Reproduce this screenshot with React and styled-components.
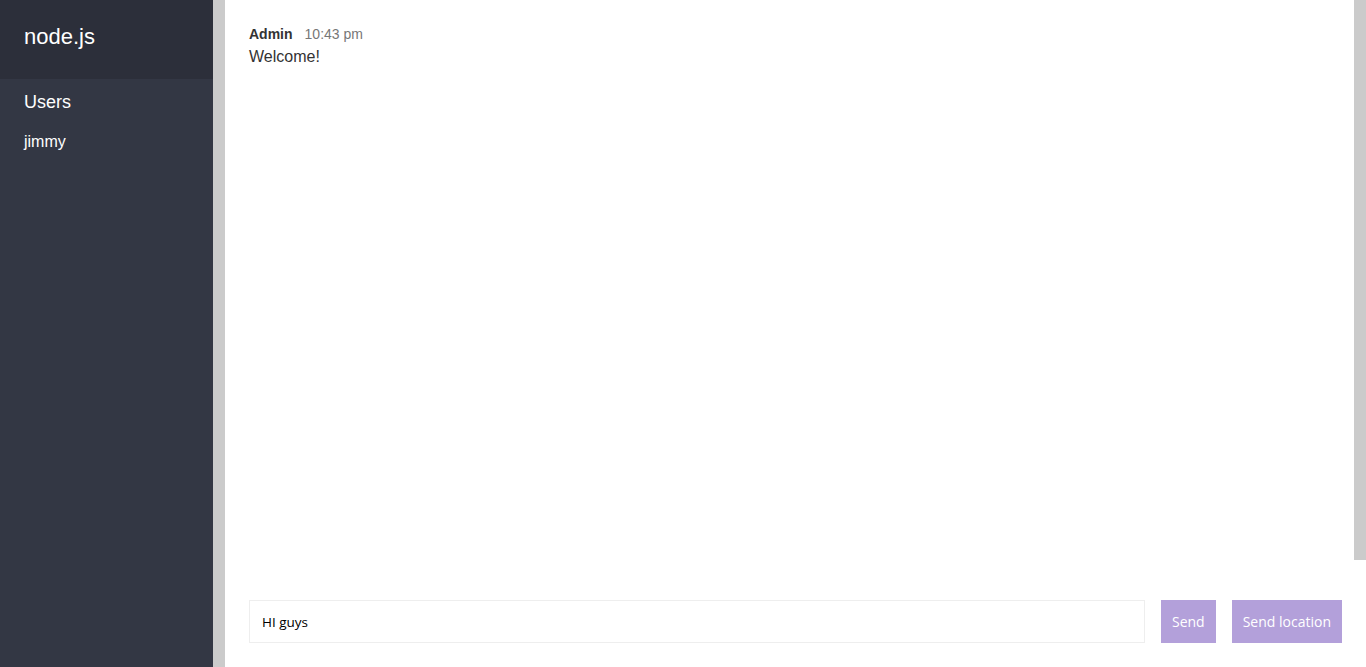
import React, { useState } from "react";
import styled, { createGlobalStyle } from "styled-components";

const GlobalStyle = createGlobalStyle`
  * { box-sizing: border-box; }
  body {
    margin: 0;
    font-family: "Liberation Sans", Helvetica, Arial, sans-serif;
    color: #333333;
    font-weight: 300;
  }
`;

const Page = styled.div`
  display: flex;
  height: 100vh;
  overflow: hidden;
`;

const Sidebar = styled.div`
  width: 213px;
  flex-shrink: 0;
  background: #333744;
  color: #ffffff;
`;

const ScrollTrack = styled.div`
  width: 12px;
  flex-shrink: 0;
  background: #cbcbcb;
`;

const RoomTitle = styled.h2`
  margin: 0;
  padding: 23px 24px 28px;
  font-size: 22px;
  line-height: 28px;
  font-weight: 400;
  background: #2c2f3a;
`;

const ListTitle = styled.h3`
  margin: 0 0 4px;
  padding: 13px 24px 0;
  font-size: 18px;
  line-height: 21px;
  font-weight: 400;
`;

const Users = styled.ul`
  list-style: none;
  margin: 0;
  padding: 16px 24px 0;
  font-size: 16px;
  line-height: 18px;
`;

const Main = styled.div`
  flex-grow: 1;
  display: flex;
  flex-direction: column;
  min-width: 0;
`;

const MessagesRow = styled.div`
  flex-grow: 1;
  display: flex;
  min-height: 0;
`;

const Messages = styled.div`
  flex-grow: 1;
  padding: 24px 24px 0;
`;

const Message = styled.div`
  margin-bottom: 16px;
`;

const Meta = styled.p`
  margin: 0 0 3px;
  font-size: 14px;
  line-height: 20px;
  color: #777777;
`;

const Name = styled.span`
  font-weight: 700;
  color: #333333;
  margin-right: 12px;
`;

const Text = styled.p`
  margin: 0;
  font-size: 16px;
  line-height: 20px;
`;

const Compose = styled.div`
  display: flex;
  flex-shrink: 0;
  margin-top: 16px;
  padding: 24px;
`;

const Form = styled.form`
  display: flex;
  flex-grow: 1;
  margin: 0 16px 0 0;
`;

const Input = styled.input`
  flex-grow: 1;
  border: 1px solid #eeeeee;
  padding: 12px;
  margin: 0 16px 0 0;
  height: 43px;
  font-family: "Open Sans", sans-serif;
  font-size: 13.5px;
  color: #000000;
  outline: none;
`;

const Button = styled.button`
  padding: 0 11px;
  height: 43px;
  border: none;
  background: rgba(124, 92, 191, 0.58);
  color: #ffffff;
  font-family: "Open Sans", sans-serif;
  font-size: 14px;
  white-space: nowrap;
`;

export default function App() {
  const [text, setText] = useState("HI guys");

  return (
    <Page>
      <GlobalStyle />
      <Sidebar>
        <RoomTitle>node.js</RoomTitle>
        <ListTitle>Users</ListTitle>
        <Users>
          <li>jimmy</li>
        </Users>
      </Sidebar>
      <ScrollTrack />
      <Main>
        <MessagesRow>
          <Messages>
            <Message>
              <Meta>
                <Name>Admin</Name>10:43 pm
              </Meta>
              <Text>Welcome!</Text>
            </Message>
          </Messages>
          <ScrollTrack />
        </MessagesRow>
        <Compose>
          <Form onSubmit={(e) => e.preventDefault()}>
            <Input value={text} onChange={(e) => setText(e.target.value)} />
            <Button disabled>Send</Button>
          </Form>
          <Button disabled>Send location</Button>
        </Compose>
      </Main>
    </Page>
  );
}
